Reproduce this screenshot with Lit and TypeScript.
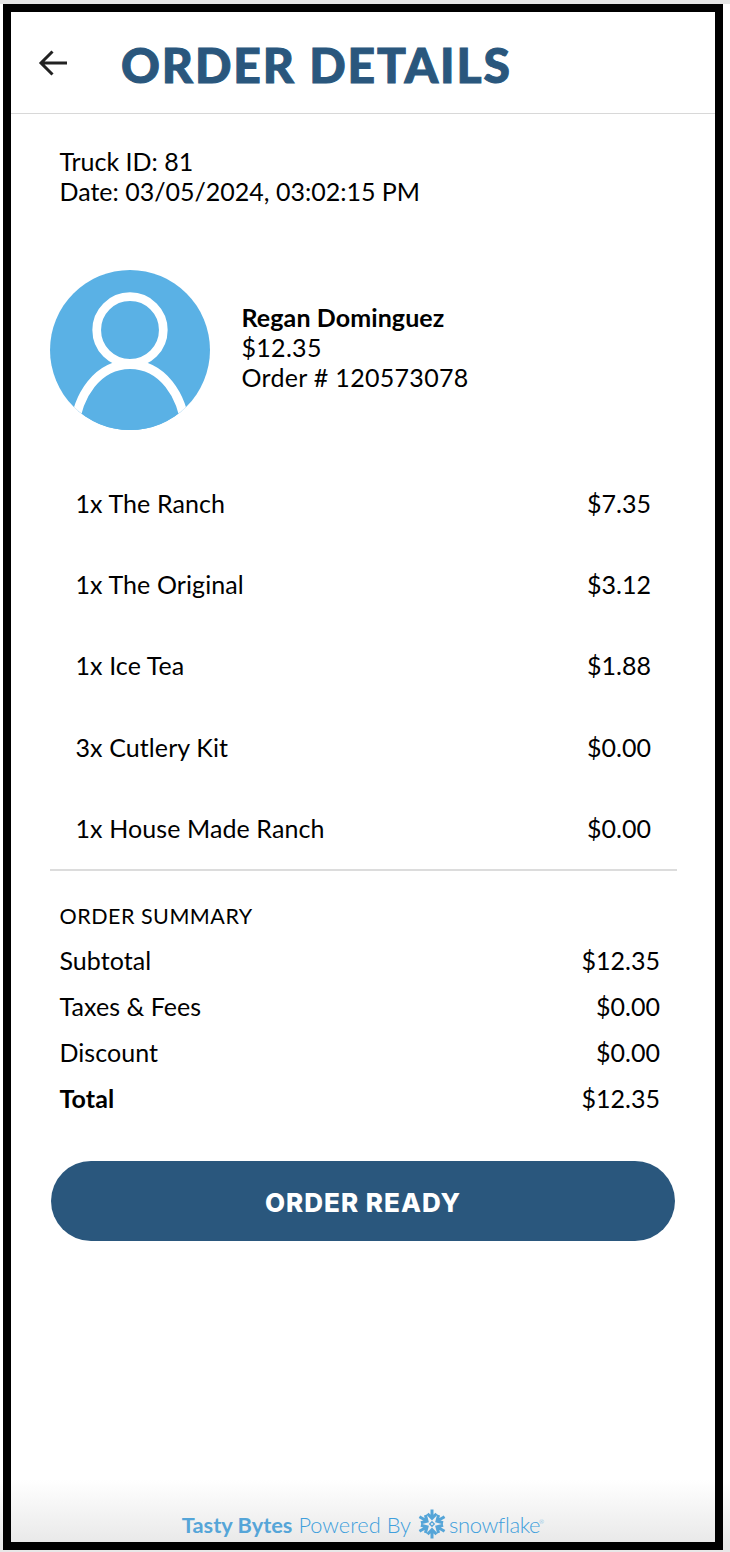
import { LitElement, css, html, svg } from 'lit'
import { customElement } from 'lit/decorators.js'

const items = [
  { name: '1x The Ranch', price: '$7.35' },
  { name: '1x The Original', price: '$3.12' },
  { name: '1x Ice Tea', price: '$1.88' },
  { name: '3x Cutlery Kit', price: '$0.00' },
  { name: '1x House Made Ranch', price: '$0.00' },
]

const summary = [
  { label: 'Subtotal', value: '$12.35' },
  { label: 'Taxes & Fees', value: '$0.00' },
  { label: 'Discount', value: '$0.00' },
  { label: 'Total', value: '$12.35', total: true },
]

@customElement('app-root')
export class AppRoot extends LitElement {
  static styles = css`
    :host {
      display: block;
      width: 730px;
      height: 1552px;
      overflow: hidden;
      box-sizing: border-box;
      padding: 4px 7px 2px 3px;
      background: linear-gradient(#fff 0, #fff 1480px, #e8e8e8 1545px);
      font-family: Lato, 'Liberation Sans', sans-serif;
      font-size: 25px;
      color: #000;
      position: relative;
    }
    .strip {
      position: absolute;
      inset: 0 0 auto 0;
      height: 4px;
      background: #e4e4e4;
    }
    .phone {
      box-sizing: border-box;
      height: 100%;
      border: 8px solid #000;
      display: flex;
      flex-direction: column;
    }
    header {
      flex: none;
      height: 101px;
      border-bottom: 1px solid #d8d8d8;
      display: flex;
      align-items: center;
      padding-left: 26px;
      background: #fff;
    }
    header svg { width: 32px; height: 32px; flex: none; }
    h1 {
      margin: 4px 0 0 52px;
      font-size: 48px;
      font-weight: 900;
      letter-spacing: 1.9px;
      -webkit-text-stroke: 1px #2a577d;
      color: #2a577d;
      line-height: 1;
    }
    main { flex: 1; display: flex; flex-direction: column; }
    .meta { padding: 32px 0 0 48.5px; line-height: 30px; }
    .customer {
      display: flex;
      align-items: center;
      gap: 32px;
      margin: 64px 0 0 39px;
      line-height: 30px;
    }
    .avatar { width: 160px; height: 160px; flex: none; display: block; }
    .info { margin-left: -0.5px; padding-bottom: 6px; letter-spacing: 0.3px; }
    .name { font-weight: 700; letter-spacing: 0.1px; }
    .items { margin: 32.25px 38px 0 39px; border-bottom: 2px solid #dcdcdc; padding-bottom: 0.75px; }
    .item {
      display: flex;
      justify-content: space-between;
      height: 81.25px;
      align-items: center;
      padding: 0 26px 0 25.5px;
    }
    .item span:first-child { letter-spacing: 0.1px; }
    .summary { padding: 0 55px 0 48.5px; }
    .summary h2 {
      margin: 31px 0 0;
      font-size: 21.5px;
      font-weight: 400;
      line-height: 28px;
      letter-spacing: 0.5px;
    }
    .line {
      display: flex;
      justify-content: space-between;
      height: 46px;
      align-items: center;
    }
    .line:first-of-type { margin-top: 7px; }
    .line span:first-child { letter-spacing: 0.05px; }
    .total span:first-child { font-weight: 700; letter-spacing: 0.1px; }
    button {
      display: block;
      box-sizing: border-box;
      width: 624px;
      height: 80px;
      margin: 40px 0 0 40px;
      padding: 2px 0 0;
      border: 0;
      border-radius: 40px;
      background: #2a577d;
      color: #fff;
      font-family: Inter, Lato, sans-serif;
      font-size: 26px;
      font-weight: 800;
      letter-spacing: 1px;
    }
    footer {
      margin-top: auto;
      height: 36px;
      display: flex;
      justify-content: center;
      align-items: center;
      gap: 6px;
      font-size: 21.8px;
      font-weight: 300;
      color: #3f9fdc;
      white-space: nowrap;
    }
    footer b { font-weight: 700; color: #55a5d8; }
    .logo { display: flex; align-items: center; gap: 2px; }
    .logo svg { width: 30px; height: 30px; display: block; }
    .logo span { font-weight: 300; font-size: 22px; letter-spacing: -0.4px; }
    .logo sup { font-size: 6px; align-self: flex-start; margin: 9px 0 0 -3px; }
  `

  render() {
    return html`
      <div class="strip"></div>
      <div class="phone">
        <header>
          <svg viewBox="0 0 32 32" fill="none" stroke="#222" stroke-width="3">
            <path d="M30 16H4M15.5 4.5 4 16l11.5 11.5" />
          </svg>
          <h1>ORDER DETAILS</h1>
        </header>
        <main>
          <div class="meta">
            <div>Truck ID: 81</div>
            <div>Date: 03/05/2024, 03:02:15 PM</div>
          </div>
          <div class="customer">
            <svg class="avatar" viewBox="0 0 160 160">
              <defs>
                <clipPath id="disc"><circle cx="80" cy="80" r="80" /></clipPath>
              </defs>
              <circle cx="80" cy="80" r="80" fill="#5ab1e5" />
              <circle cx="80" cy="60" r="33.300" fill="#5ab1e5" stroke="#fff" stroke-width="8.700" />
              <path
                clip-path="url(#disc)"
                d="M23 170C25 122 50 94.500 80 94.500S135 122 137 170"
                fill="#5ab1e5"
                stroke="#fff"
                stroke-width="9"
              />
            </svg>
            <div class="info">
              <div class="name">Regan Dominguez</div>
              <div>$12.35</div>
              <div>Order # 120573078</div>
            </div>
          </div>
          <div class="items">
            ${items.map(
              (i) => html`<div class="item"><span>${i.name}</span><span>${i.price}</span></div>`,
            )}
          </div>
          <div class="summary">
            <h2>ORDER SUMMARY</h2>
            ${summary.map(
              (s) => html`<div class="line ${s.total ? 'total' : ''}">
                <span>${s.label}</span><span>${s.value}</span>
              </div>`,
            )}
          </div>
          <button>ORDER READY</button>
        </main>
        <footer>
          <b>Tasty Bytes</b> Powered By
          <div class="logo">
            <svg viewBox="0 0 30 30" fill="none" stroke="#55a5d8" stroke-width="3">
              ${[0, 60, 120, 180, 240, 300].map(
                (a) => svg`<path transform="rotate(${a} 15 15)" d="M15 .5V9.500M10.500 4.800 15 9.300 19.500 4.800" />`,
              )}
              <path d="M15 12.700 17.300 15 15 17.300 12.700 15Z" stroke-width="1.300" />
            </svg>
            <span>snowflake</span><sup>®</sup>
          </div>
        </footer>
      </div>
    `
  }
}
